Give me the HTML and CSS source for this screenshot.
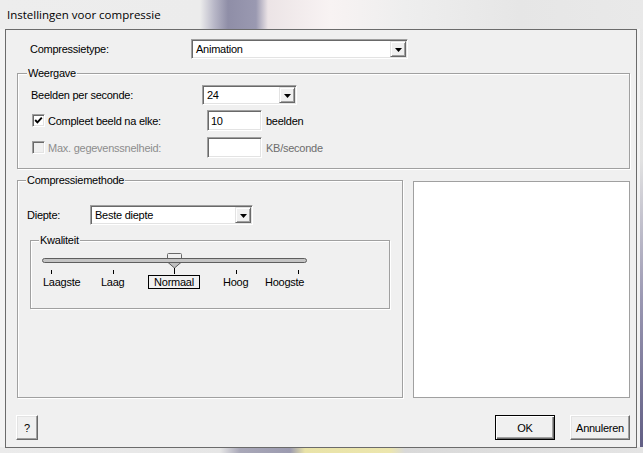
FILE: index.html
```html
<!DOCTYPE html>
<html lang="nl">
<head>
<meta charset="utf-8">
<title>Instellingen voor compressie</title>
<link rel="stylesheet" href="styles.css">
</head>
<body>
<div class="window">
  <div class="titlebar"><span class="title">Instellingen voor compressie</span></div>
  <div class="frame-mid">
    <div class="client">
      <div class="row-type">
        <span class="lbl lbl-type">Compressietype:</span>
        <div class="combo combo-type">
          <span class="combo-text">Animation</span>
          <span class="combo-btn"><svg width="7" height="4" viewBox="0 0 7 4"><polygon points="0,0 7,0 3.5,4" fill="#000"/></svg></span>
        </div>
      </div>

      <div class="group group-weergave">
        <span class="legend">Weergave</span>
        <div class="wrow wrow-fps">
          <span class="lbl lbl-fps">Beelden per seconde:</span>
          <div class="combo combo-fps">
            <span class="combo-text">24</span>
            <span class="combo-btn"><svg width="7" height="4" viewBox="0 0 7 4"><polygon points="0,0 7,0 3.5,4" fill="#000"/></svg></span>
          </div>
        </div>
        <div class="wrow wrow-key">
          <span class="check-label">
            <span class="checkbox"><svg width="9" height="9" viewBox="0 0 9 9"><polyline points="1.2,4 3.4,6.3 7.8,1.6" fill="none" stroke="#000" stroke-width="1.9"/></svg></span>
            <span>Compleet beeld na elke:</span>
          </span>
          <div class="textbox">10</div>
          <span class="unit">beelden</span>
        </div>
        <div class="wrow wrow-rate disabled">
          <span class="check-label">
            <span class="checkbox checkbox-off"></span>
            <span>Max. gegevenssnelheid:</span>
          </span>
          <div class="textbox textbox-off"></div>
          <span class="unit">KB/seconde</span>
        </div>
      </div>

      <div class="lower">
        <div class="group group-method">
          <span class="legend">Compressiemethode</span>
          <div class="depth-row">
            <span class="lbl lbl-depth">Diepte:</span>
            <div class="combo combo-depth">
              <span class="combo-text">Beste diepte</span>
              <span class="combo-btn"><svg width="7" height="4" viewBox="0 0 7 4"><polygon points="0,0 7,0 3.5,4" fill="#000"/></svg></span>
            </div>
          </div>
          <div class="group group-quality">
            <span class="legend">Kwaliteit</span>
            <div class="slider">
              <svg class="slider-svg" width="300" height="26" viewBox="0 0 300 26">
                <path d="M136.5,9 V4.5 Q136.5,3.5 137.5,3.5 H149.5 Q150.5,3.5 150.5,4.5 V9" fill="none" stroke="#6a6a6a"/>
                <polygon points="136.5,11 150.5,11 150.5,12 143.5,18 136.5,12" fill="#c0c0c0" stroke="#5a5a5a" stroke-linejoin="round"/>
                <rect x="11.5" y="8.5" width="264" height="4" rx="2" ry="2" fill="#c4c4c4" stroke="#5e5e5e"/>
                <g stroke="#000">
                  <line x1="20.5" y1="20" x2="20.5" y2="24"/>
                  <line x1="82.5" y1="20" x2="82.5" y2="24"/>
                  <line x1="143.5" y1="18" x2="143.5" y2="24"/>
                  <line x1="205.5" y1="20" x2="205.5" y2="24"/>
                  <line x1="267.5" y1="20" x2="267.5" y2="24"/>
                </g>
              </svg>
              <span class="tick-label" style="left:12px">Laagste</span>
              <span class="tick-label" style="left:70px">Laag</span>
              <span class="tick-label tick-focus" style="left:117px">Normaal</span>
              <span class="tick-label" style="left:192px">Hoog</span>
              <span class="tick-label" style="left:234px">Hoogste</span>
            </div>
          </div>
        </div>
        <div class="preview"></div>
      </div>

      <div class="buttons">
        <button class="btn btn-help">?</button>
        <button class="btn btn-ok">OK</button>
        <button class="btn btn-cancel">Annuleren</button>
      </div>
    </div>
  </div>
</div>
</body>
</html>
```

FILE: styles.css
```css
* { box-sizing: border-box; }
html, body { margin: 0; padding: 0; }
body {
  width: 643px;
  height: 453px;
  overflow: hidden;
  font-family: "Liberation Sans", Arial, sans-serif;
  font-size: 11px;
  letter-spacing: -0.25px;
  color: #000;
}

.window {
  width: 643px;
  height: 453px;
  display: flex;
  flex-direction: column;
  background:
    linear-gradient(to right, #ededed 0, #ececec 200px, #b9b8c8 214px, #8f8ea7 228px, #9a99b1 256px, #ece4e6 268px, #f8f3f3 330px, #eeeeee 405px, #e6e6e6 520px, #e9e9e9 643px) left top / 100% 29px no-repeat,
    linear-gradient(to right, #ebebeb 0, #e6e6e6 220px, #a9a8b8 240px, #9c9bb0 290px, #e9e3a8 305px, #ece6ae 390px, #d9d9d9 405px, #e4e4e4 643px) left bottom / 100% 6px no-repeat,
    linear-gradient(to bottom, #e9e9e9 0, #e2e2e2 160px, #9a97b2 300px, #5f5c82 453px) right top / 3px 100% no-repeat,
    #f3f3f3;
}

.titlebar {
  height: 29px;
  flex: none;
  display: flex;
  align-items: center;
  padding: 0 0 0 7px;
  font-family: "Open Sans", "Noto Sans", sans-serif;
  font-size: 11.5px;
  letter-spacing: 0;
  color: #000;
}

.frame-mid { display: flex; flex: none; height: 419px; }

.client {
  margin-left: 5px;
  width: 632px;
  height: 419px;
  border: 1px solid #6b6b6b;
  background: #f0f0f0;
  padding: 0 6px 0 11px;
  display: flex;
  flex-direction: column;
}

.lbl { white-space: nowrap; }

/* combo boxes */
.combo {
  display: flex;
  align-items: stretch;
  height: 20px;
  background: #fff;
  border: 1px solid;
  border-color: #a0a0a0 #ffffff #ffffff #a0a0a0;
  box-shadow: inset 1px 1px 0 #696969, inset -1px -1px 0 #e3e3e3;
  padding: 1px;
}
.combo-text { flex: 1; padding-left: 3px; display: flex; align-items: center; white-space: nowrap; }
.combo-btn {
  width: 16px;
  flex: none;
  background: #f0f0f0;
  border: 1px solid;
  border-color: #e3e3e3 #696969 #696969 #e3e3e3;
  box-shadow: inset 1px 1px 0 #fff, inset -1px -1px 0 #a0a0a0;
  display: flex;
  align-items: center;
  justify-content: center;
}
.combo-btn svg { display: block; margin-top: 1px; }

.row-type { display: flex; align-items: center; height: 20px; margin-top: 9px; flex: none; }
.lbl-type { width: 174px; padding-left: 13px; }
.combo-type { width: 217px; }

/* group boxes */
.group {
  position: relative;
  border: 1px solid #a0a0a0;
  box-shadow: inset 1px 1px 0 #fff, 1px 1px 0 #fff;
  flex: none;
}
.legend {
  position: absolute;
  top: -7px;
  left: 9px;
  padding: 0 1px;
  background: #f0f0f0;
  line-height: 13px;
  white-space: nowrap;
}

.group-weergave {
  margin-top: 14px;
  height: 96px;
  padding: 11px 0 0 13px;
  display: flex;
  flex-direction: column;
}
.wrow { display: flex; align-items: center; flex: none; }
.wrow-fps { height: 20px; }
.lbl-fps { width: 171px; }
.combo-fps { width: 95px; }
.wrow-key { height: 21px; margin-top: 5px; }
.wrow-rate { height: 21px; margin-top: 6px; }

.check-label { width: 176px; display: flex; align-items: center; white-space: nowrap; }
.checkbox {
  width: 13px;
  height: 13px;
  margin-left: 1px;
  margin-right: 3px;
  background: #fff;
  border: 1px solid;
  border-color: #a0a0a0 #ffffff #ffffff #a0a0a0;
  box-shadow: inset 1px 1px 0 #696969, inset -1px -1px 0 #e3e3e3;
  display: flex;
  align-items: center;
  justify-content: center;
}
.checkbox svg { display: block; }
.checkbox-off { background: #f0f0f0; }

.textbox {
  width: 55px;
  height: 21px;
  background: #fff;
  border: 1px solid;
  border-color: #a0a0a0 #ffffff #ffffff #a0a0a0;
  box-shadow: inset 1px 1px 0 #696969, inset -1px -1px 0 #e3e3e3;
  padding-left: 3px;
  display: flex;
  align-items: center;
}
.unit { margin-left: 4px; white-space: nowrap; }
.disabled .check-label, .disabled .unit { color: #8d8d8d; }
.disabled .unit { color: #6d6d6d; }

/* lower area */
.lower { display: flex; margin-top: 11px; height: 218px; flex: none; }
.group-method {
  width: 386px;
  height: 218px;
  padding: 24px 0 0 9px;
}
.group-method > .legend { left: 8px; }
.depth-row { display: flex; align-items: center; height: 20px; }
.lbl-depth { width: 63px; }
.combo-depth { width: 163px; }

.group-quality {
  margin-top: 15px;
  margin-left: 3px;
  width: 360px;
  height: 69px;
}
.group-quality > .legend { left: 8px; }

.slider { position: relative; margin-top: 9px; height: 40px; }
.slider-svg { display: block; }
.tick-label {
  position: absolute;
  top: 25px;
  line-height: 14px;
  white-space: nowrap;
}
.tick-focus {
  width: 52px;
  height: 14px;
  border: 1px solid #000;
  text-align: center;
  line-height: 12px;
}

.preview {
  margin-left: 10px;
  margin-top: 1px;
  width: 218px;
  height: 217px;
  background: #fff;
  border: 1px solid #a0a0a0;
}

/* buttons */
.buttons { display: flex; margin-top: 17px; height: 25px; flex: none; }
.btn {
  font: inherit;
  letter-spacing: inherit;
  color: #000;
  height: 25px;
  padding: 0;
  background: #f0f0f0;
  border: 1px solid;
  border-color: #ffffff #696969 #696969 #ffffff;
  box-shadow: inset -1px -1px 0 #a0a0a0, inset 1px 1px 0 #e3e3e3;
}
.btn-help { width: 22px; margin-left: -1px; }
.btn-ok {
  margin-left: auto;
  width: 60px;
  border-color: #000;
  box-shadow: inset 1px 1px 0 #fff, inset -1px -1px 0 #696969, inset -2px -2px 0 #a0a0a0;
}
.btn-cancel { width: 60px; margin-left: 15px; }
```
